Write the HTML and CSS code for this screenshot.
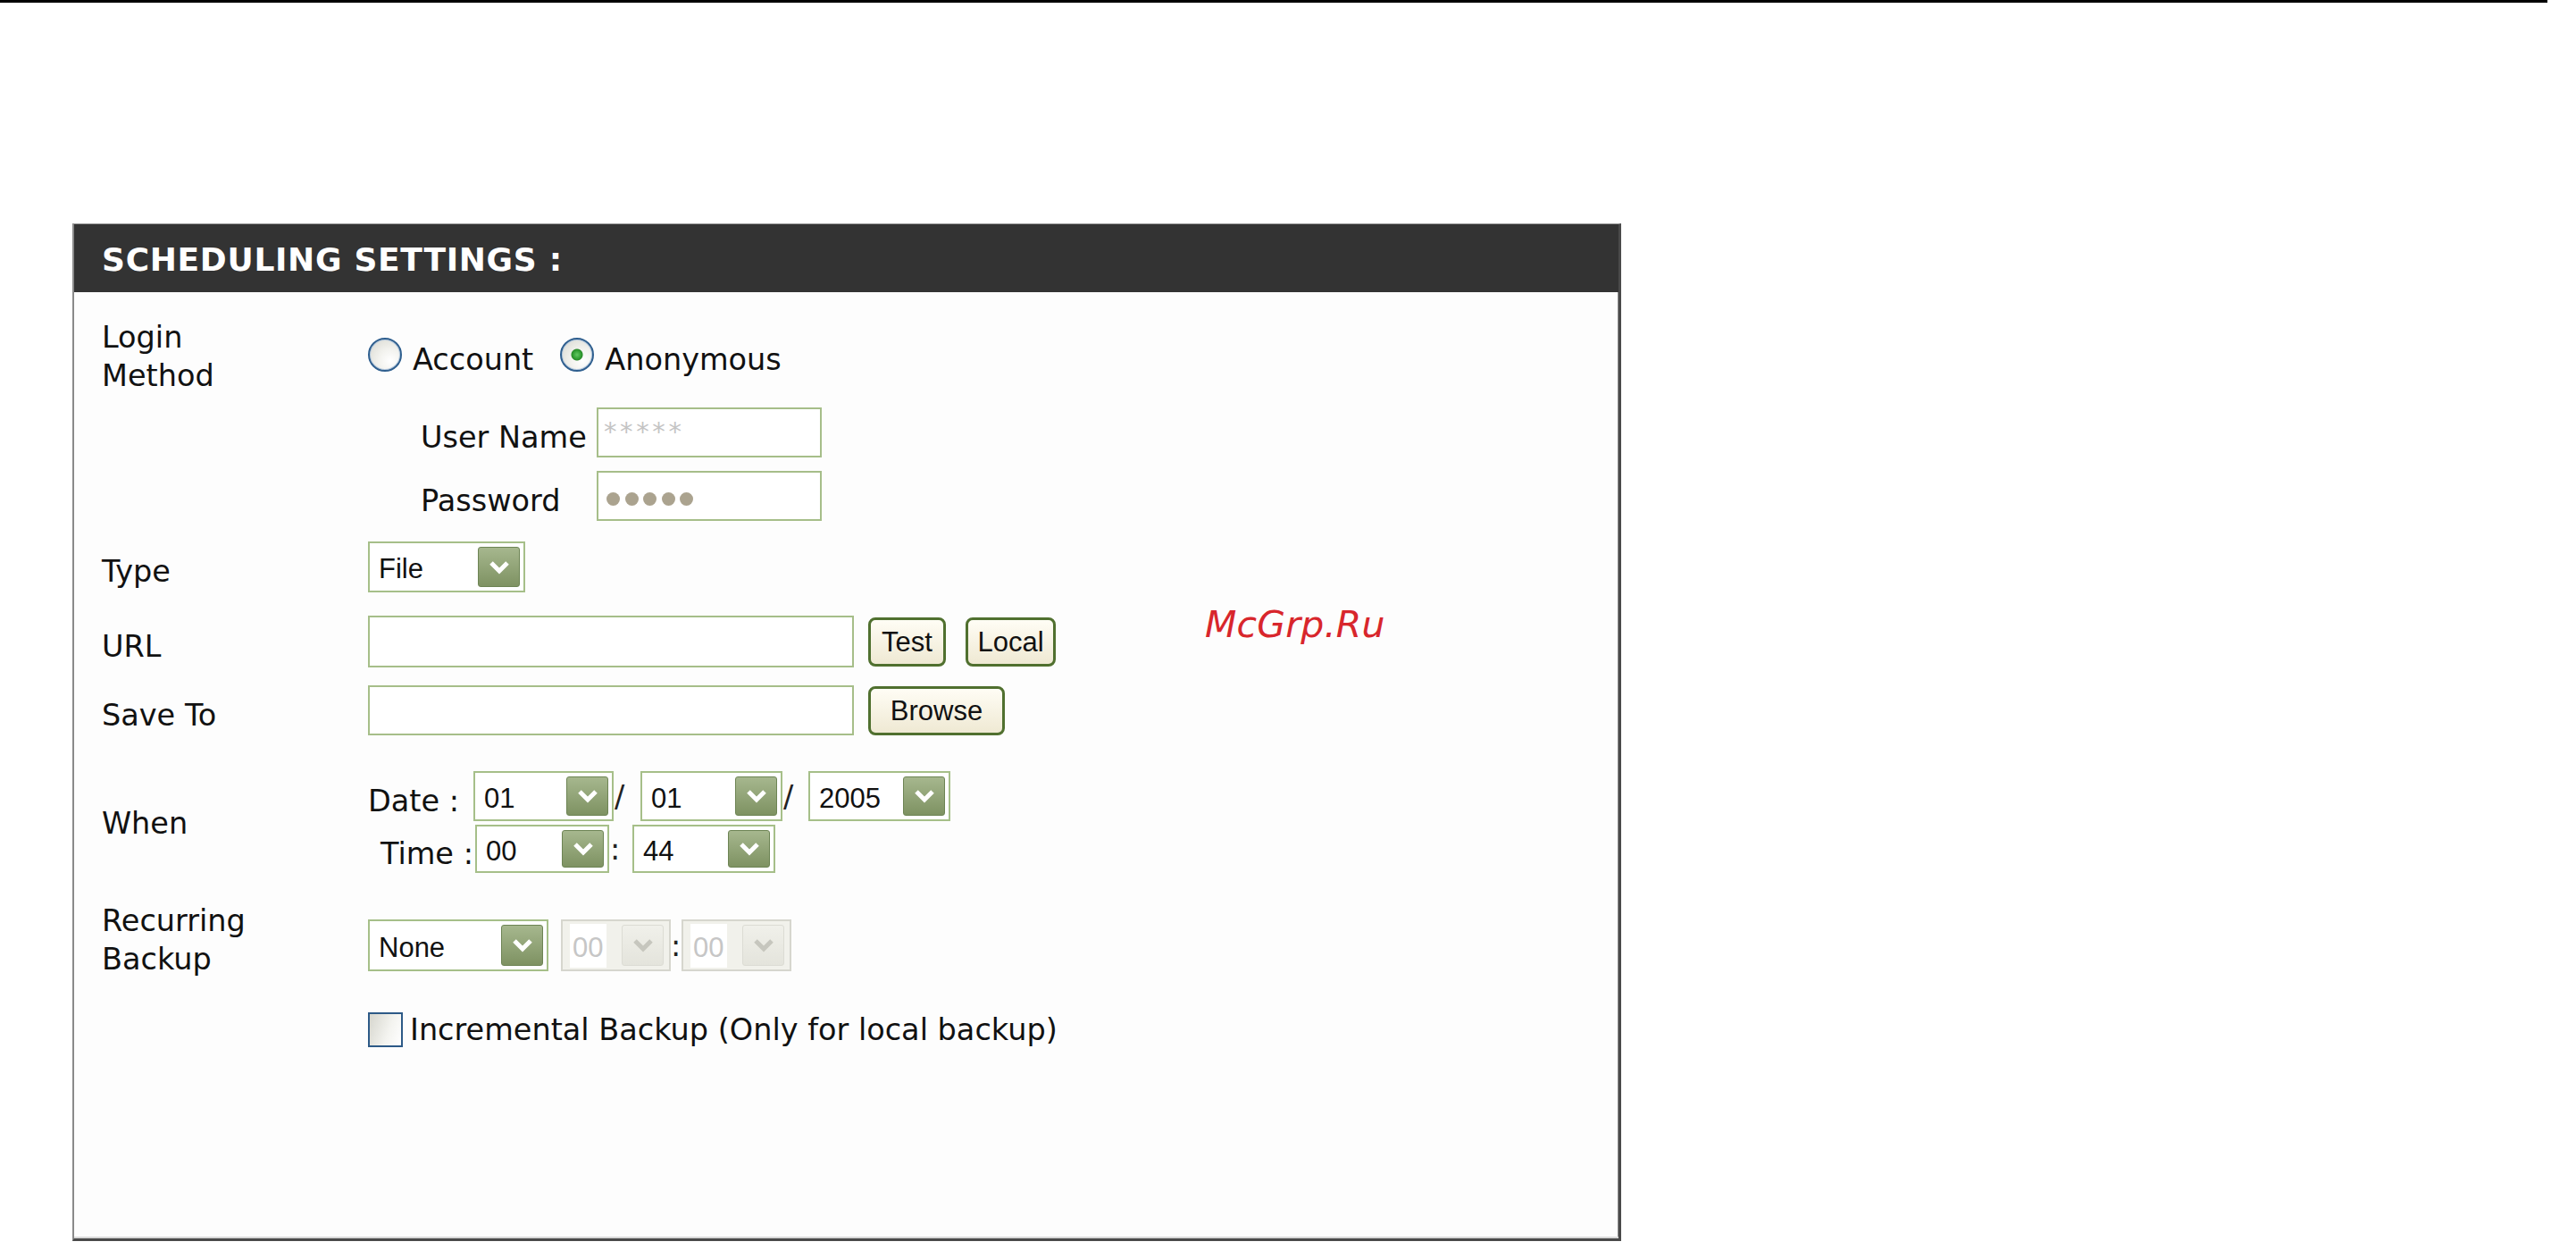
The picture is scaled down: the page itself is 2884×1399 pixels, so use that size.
FILE: index.html
```html
<!DOCTYPE html>
<html lang="en">
<head>
<meta charset="utf-8">
<title>Scheduling Settings</title>
<link rel="stylesheet" href="styles.css">
</head>
<body>
<div class="rule"></div>
<div class="watermark">McGrp.Ru</div>
<section class="panel">
  <h2 class="panel-title">SCHEDULING SETTINGS :</h2>
  <div class="panel-body">

    <div class="row r-login">
      <div class="label">Login<br>Method</div>
      <div class="radios">
        <span class="radio"></span><span class="opt opt-account">Account</span>
        <span class="radio checked"></span><span class="opt">Anonymous</span>
      </div>
    </div>

    <div class="row r-user">
      <div class="label"></div>
      <span class="sublabel">User Name</span>
      <div class="field field-cred"><span class="mask">*****</span></div>
    </div>

    <div class="row r-pass">
      <div class="label"></div>
      <span class="sublabel">Password</span>
      <div class="field field-cred field-dots"><span class="dots"><i></i><i></i><i></i><i></i><i></i></span></div>
    </div>

    <div class="row r-type">
      <div class="label shifted">Type</div>
      <div class="select s-file"><span class="val">File</span><span class="arrow"><svg viewBox="0 0 24 16"><polyline points="3,3 12,12 21,3"/></svg></span></div>
    </div>

    <div class="row r-url">
      <div class="label shifted">URL</div>
      <div class="field field-wide"></div>
      <button class="btn b-test">Test</button>
      <button class="btn b-local">Local</button>
    </div>

    <div class="row r-save">
      <div class="label shifted">Save To</div>
      <div class="field field-wide"></div>
      <button class="btn b-browse">Browse</button>
    </div>

    <div class="row r-when">
      <div class="label when-label">When</div>
      <div class="when">
        <div class="when-line l-date">
          <span class="wl date-label">Date :</span>
          <div class="select s-d1"><span class="val">01</span><span class="arrow"><svg viewBox="0 0 24 16"><polyline points="3,3 12,12 21,3"/></svg></span></div>
          <span class="sep s-slash1">/</span>
          <div class="select s-d2"><span class="val">01</span><span class="arrow"><svg viewBox="0 0 24 16"><polyline points="3,3 12,12 21,3"/></svg></span></div>
          <span class="sep s-slash2">/</span>
          <div class="select s-d3"><span class="val">2005</span><span class="arrow"><svg viewBox="0 0 24 16"><polyline points="3,3 12,12 21,3"/></svg></span></div>
        </div>
        <div class="when-line l-time">
          <span class="wl time-label">Time :</span>
          <div class="select s-t1"><span class="val">00</span><span class="arrow"><svg viewBox="0 0 24 16"><polyline points="3,3 12,12 21,3"/></svg></span></div>
          <span class="sep s-colon">:</span>
          <div class="select s-t2"><span class="val">44</span><span class="arrow"><svg viewBox="0 0 24 16"><polyline points="3,3 12,12 21,3"/></svg></span></div>
        </div>
      </div>
    </div>

    <div class="row r-recur">
      <div class="label">Recurring<br>Backup</div>
      <div class="recur">
        <div class="select s-none"><span class="val">None</span><span class="arrow"><svg viewBox="0 0 24 16"><polyline points="3,3 12,12 21,3"/></svg></span></div>
        <div class="select disabled s-dis1"><span class="val">00</span><span class="arrow"><svg viewBox="0 0 24 16"><polyline points="3,3 12,12 21,3"/></svg></span></div>
        <span class="sep s-colon2">:</span>
        <div class="select disabled s-dis2"><span class="val">00</span><span class="arrow"><svg viewBox="0 0 24 16"><polyline points="3,3 12,12 21,3"/></svg></span></div>
      </div>
    </div>

    <div class="row r-check">
      <div class="label"></div>
      <span class="check"></span><span class="check-text">Incremental Backup (Only for local backup)</span>
    </div>

  </div>
</section>
</body>
</html>
```

FILE: styles.css
```css
html, body {
  margin: 0;
  padding: 0;
  background: #ffffff;
}

body {
  position: relative;
  width: 2884px;
  height: 1399px;
  overflow: hidden;
  font-family: "DejaVu Sans", Verdana, sans-serif;
  font-size: 33.5px;
  line-height: 43px;
  color: #111111;
}

.rule {
  height: 3px;
  width: 2852px;
  background: #000000;
}

.watermark {
  position: absolute;
  left: 1349px;
  top: 679px;
  font-family: "DejaVu Sans", sans-serif;
  font-style: italic;
  font-size: 41px;
  line-height: 40px;
  letter-spacing: 0.2px;
  color: #d8262c;
}

/* ---------- panel ---------- */
.panel {
  margin: 247px 0 0 81px;
  width: 1734px;
  height: 1139px;
  box-sizing: border-box;
  display: flex;
  flex-direction: column;
  background: #fdfdfd;
  border-top: 1px solid #9c9c9c;
  border-left: 2px solid #8a8a8a;
  border-right: 3px solid #4a4a4a;
  border-bottom: 3px solid #4a4a4a;
  box-shadow: inset 0 -2px 0 #d8d8d8, inset -1px 0 0 #8a8a8a;
}

.panel-title {
  margin: 0;
  height: 76px;
  box-sizing: border-box;
  padding: 4px 0 0 31px;
  background: #333333;
  color: #ffffff;
  font-family: "DejaVu Sans", Verdana, sans-serif;
  font-weight: bold;
  font-size: 36px;
  line-height: 72px;
  letter-spacing: 0.7px;
}

.panel-body {
  flex: 1;
  padding: 29px 0 0 31px;
  display: flex;
  flex-direction: column;
}

/* ---------- rows ---------- */
.row {
  display: flex;
  align-items: center;
}

.label {
  width: 298px;
  flex: none;
}

.label.shifted,
.sublabel,
.wl {
  padding-top: 10px;
}

.r-login { height: 86px; align-items: flex-start; }
.r-user  { margin-top: 14px; height: 56px; }
.r-pass  { margin-top: 15px; height: 56px; }
.r-type  { margin-top: 23px; height: 57px; }
.r-url   { margin-top: 26px; height: 58px; }
.r-save  { margin-top: 20px; height: 56px; }
.r-when  { margin-top: 40px; height: 114px; }
.r-recur { margin-top: 32px; height: 86px; align-items: flex-start; }
.r-check { margin-top: 38px; height: 39px; }

.when-label { padding-top: 3px; }

/* ---------- radios ---------- */
.radios {
  display: flex;
  align-items: flex-start;
  margin-top: 20px;
  height: 43px;
}

.radio {
  width: 38px;
  height: 38px;
  margin-top: 2px;
  box-sizing: border-box;
  border-radius: 50%;
  border: 2px solid #2f5f8f;
  box-shadow: inset 0 0 0 1px #b9cce0;
  background: radial-gradient(circle at 68% 70%, #ffffff 0, #f2f2ee 40%, #d6d6ce 100%);
}

.radio.checked {
  background:
    radial-gradient(circle, #62c862 0, #2f9a2f 5px, #2a8a2a 6px, rgba(0,0,0,0) 7px),
    radial-gradient(circle at 68% 70%, #ffffff 0, #f2f2ee 40%, #d6d6ce 100%);
}

.opt {
  padding-top: 5px;
  margin-left: 12px;
}

.opt-account {
  margin-right: 30px;
}

/* ---------- text fields ---------- */
.sublabel {
  width: 197px;
  margin-left: 59px;
  flex: none;
}

.field {
  box-sizing: border-box;
  height: 100%;
  border: 2px solid #a6be89;
  background: #ffffff;
  flex: none;
}

.field-cred {
  width: 252px;
  display: flex;
  align-items: flex-start;
}

.field-wide {
  width: 544px;
}

.mask {
  padding: 10px 0 0 6px;
  font-family: "DejaVu Sans", sans-serif;
  font-size: 29px;
  line-height: 30px;
  letter-spacing: 3.6px;
  color: #c4c4c4;
}

.field-dots {
  align-items: center;
}

.dots {
  display: flex;
  margin: 7px 0 0 9px;
}

.dots i {
  width: 15px;
  height: 15px;
  border-radius: 50%;
  background: #aba38f;
  margin-right: 5.5px;
}

/* ---------- buttons ---------- */
.btn {
  box-sizing: border-box;
  height: 55px;
  padding: 0;
  margin: 0;
  border: 3px solid #50702f;
  border-radius: 8px;
  background: linear-gradient(#fffdf5, #efe9d3);
  font-family: "Liberation Sans", Arial, sans-serif;
  font-size: 31px;
  line-height: 49px;
  color: #111111;
  text-align: center;
  flex: none;
}

.b-test   { width: 87px;  margin-left: 16px; }
.b-local  { width: 101px; margin-left: 22px; }
.b-browse { width: 153px; margin-left: 16px; }

/* ---------- selects ---------- */
.select {
  box-sizing: border-box;
  display: flex;
  align-items: center;
  justify-content: space-between;
  border: 2px solid #a6bf89;
  background: #ffffff;
  padding: 0 4px 0 10px;
  font-family: "Liberation Sans", Arial, sans-serif;
  font-size: 31px;
  line-height: 36px;
  color: #111111;
  flex: none;
}

.select .val {
  padding-top: 5px;
}

.select .arrow {
  box-sizing: border-box;
  width: 47px;
  align-self: stretch;
  margin: 4px 0;
  border: 1px solid #6d8454;
  border-radius: 3px;
  background: linear-gradient(#a6b78e, #7e9262);
  display: flex;
  align-items: center;
  justify-content: center;
}

.select .arrow svg {
  width: 24px;
  height: 16px;
}

.select .arrow polyline {
  fill: none;
  stroke: #ffffff;
  stroke-width: 5;
}

.s-file { width: 176px; height: 57px; }
.s-d1   { width: 157px; height: 56px; }
.s-d2   { width: 159px; height: 56px; }
.s-d3   { width: 159px; height: 56px; }
.s-t1   { width: 150px; height: 54px; }
.s-t2   { width: 160px; height: 54px; }
.s-none { width: 202px; height: 58px; }
.s-dis1 { width: 123px; height: 58px; margin-left: 14px; }
.s-dis2 { width: 123px; height: 58px; }

.select.disabled {
  border-color: #d6d6ce;
  background: #f1f1eb;
  color: #c6c6c6;
  padding: 0 6px 0 8px;
}

.select.disabled .val {
  background: #ffffff;
  padding: 9px 4px 4px 3px;
}

.select.disabled .arrow {
  border-color: #dcdcd4;
  background: linear-gradient(#f0f0ea, #e4e4dc);
}

.select.disabled .arrow polyline {
  stroke: #c6c6be;
}

/* ---------- when ---------- */
.when {
  display: flex;
  flex-direction: column;
  gap: 4px;
}

.when-line {
  display: flex;
  align-items: center;
}

.l-date { height: 56px; }
.l-time { height: 54px; }

.date-label {
  width: 118px;
  margin-left: 0;
  flex: none;
}

.time-label {
  width: 106px;
  margin-left: 14px;
  flex: none;
}

.sep {
  flex: none;
  color: #222222;
}

.s-slash1 { width: 30px; padding-left: 1px; box-sizing: border-box; }
.s-slash2 { width: 29px; padding-left: 1px; box-sizing: border-box; }
.s-colon  { width: 26px; padding-left: 1px; box-sizing: border-box; }
.s-colon2 { width: 12px; padding-left: 0; box-sizing: border-box; }

/* ---------- recurring ---------- */
.recur {
  display: flex;
  align-items: center;
  margin-top: 20px;
  height: 58px;
}

/* ---------- checkbox ---------- */
.check {
  width: 39px;
  height: 39px;
  box-sizing: border-box;
  border: 2px solid #2d5a87;
  background: linear-gradient(110deg, #d6d6ce 0, #f4f4f0 60%, #ffffff 100%);
  flex: none;
}

.check-text {
  margin-left: 8px;
}
```
